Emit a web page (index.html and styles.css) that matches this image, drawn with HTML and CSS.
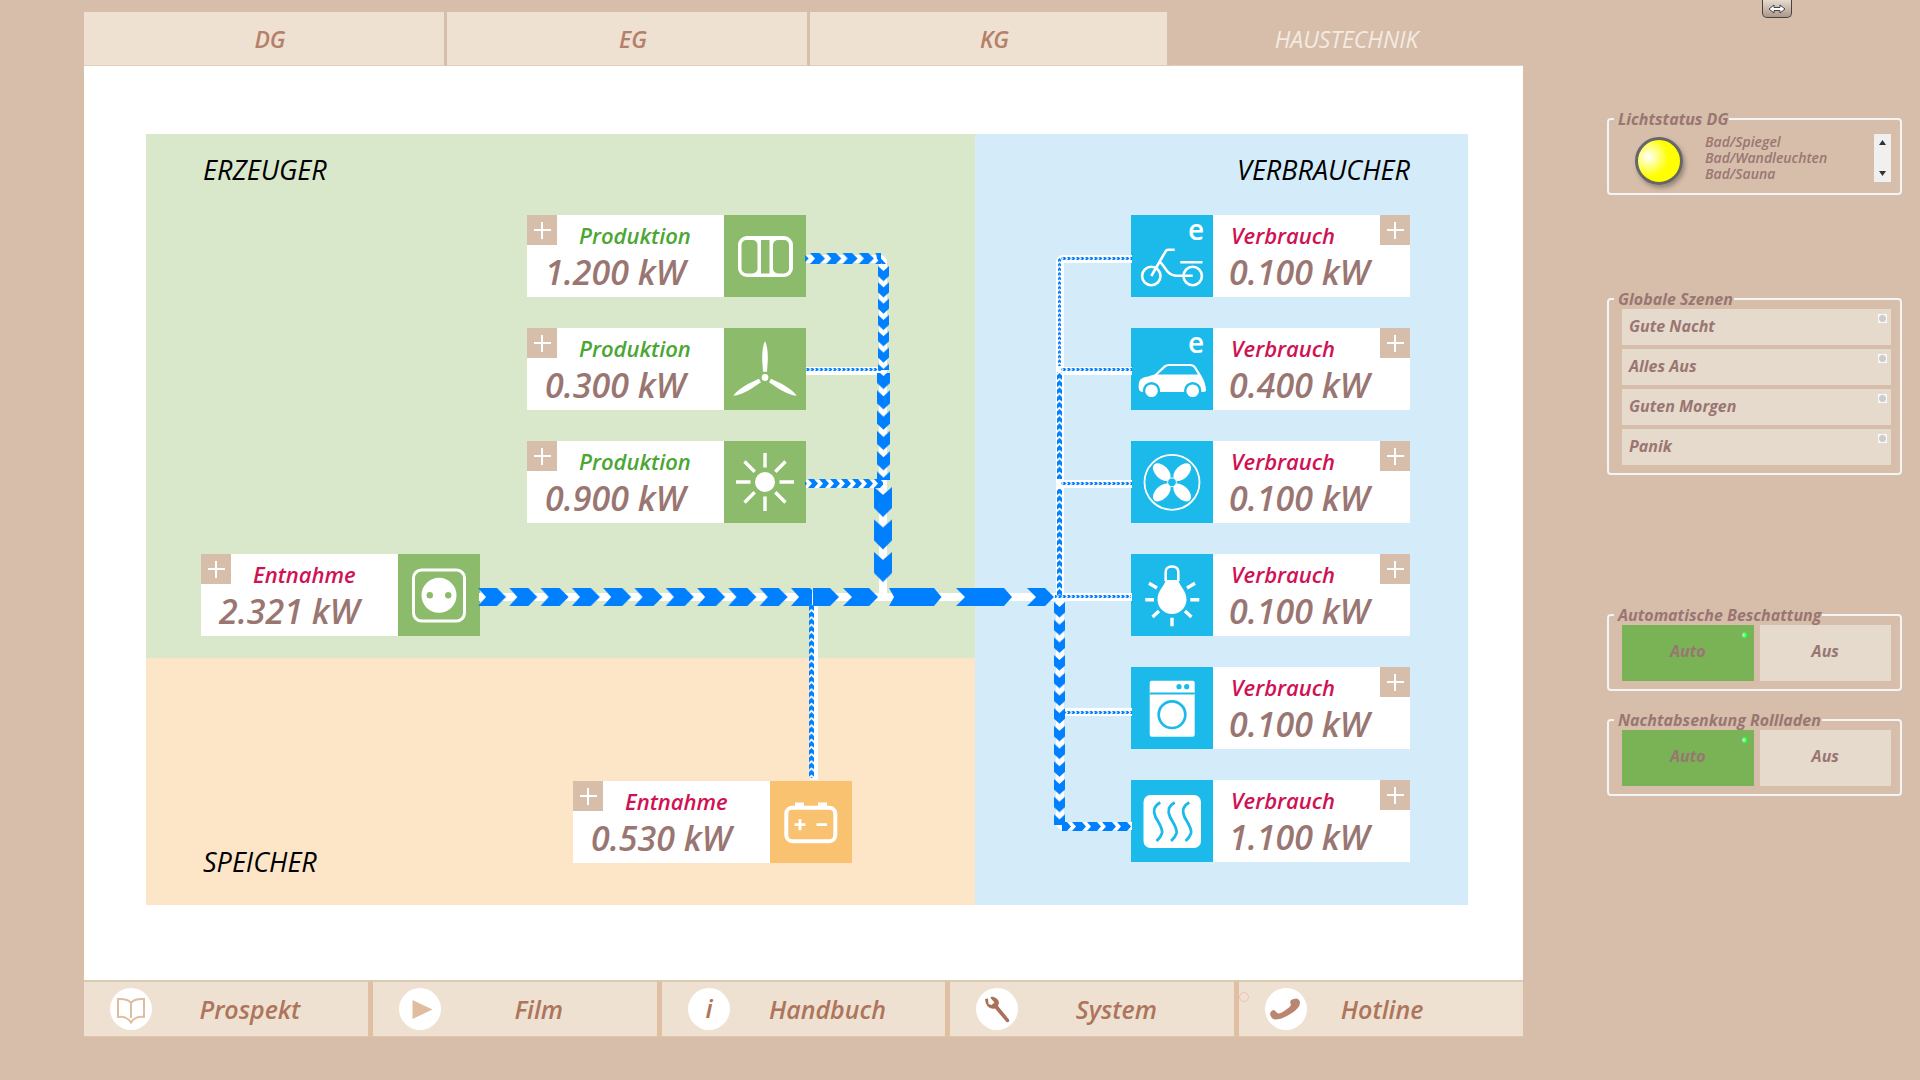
FILE: index.html
```html
<!DOCTYPE html>
<html lang="de">
<head>
<meta charset="utf-8">
<title>Haustechnik</title>
<link rel="stylesheet" href="styles.css">
</head>
<body>
<main class="main">
  <nav class="tabs" aria-label="Bereiche">
    <a class="tab" href="#dg">DG</a>
    <a class="tab" href="#eg">EG</a>
    <a class="tab" href="#kg">KG</a>
    <a class="tab tab--active" href="#haustechnik" aria-current="page">HAUSTECHNIK</a>
  </nav>

  <div class="panel">
    <div class="diagram">
      <section class="zone zone--producers">
        <h2 class="zone__title">ERZEUGER</h2>
        <article class="card">
          <div class="card__body">
            <div class="card__head"><button class="plus" aria-label="Details"></button><span class="card__label card__label--gain">Produktion</span></div>
            <span class="card__value">1.200 kW</span>
          </div>
          <svg class="card__icon card__icon--green" viewBox="0 0 82 82">
            <rect x="14" y="21" width="55" height="41" rx="9" fill="#fff"/>
            <rect x="17.5" y="25" width="16" height="33.5" rx="5" fill="#8cbb6b"/>
            <rect x="37" y="25" width="8.5" height="33.5" fill="#8cbb6b"/>
            <rect x="49" y="25" width="16" height="33.5" rx="5" fill="#8cbb6b"/>
          </svg>
        </article>
        <article class="card">
          <div class="card__body">
            <div class="card__head"><button class="plus" aria-label="Details"></button><span class="card__label card__label--gain">Produktion</span></div>
            <span class="card__value">0.300 kW</span>
          </div>
          <svg class="card__icon card__icon--green" viewBox="0 0 82 82" fill="#fff">
            <circle cx="41" cy="49.5" r="3.4"/>
            <path d="M41 13C43 17 44 24 43.8 32L43 43.7H39L38.2 32C38 24 39 17 41 13Z"/>
            <path d="M41 13C43 17 44 24 43.8 32L43 43.7H39L38.2 32C38 24 39 17 41 13Z" transform="rotate(120 41 49.5)"/>
            <path d="M41 13C43 17 44 24 43.8 32L43 43.7H39L38.2 32C38 24 39 17 41 13Z" transform="rotate(240 41 49.5)"/>
          </svg>
        </article>
        <article class="card">
          <div class="card__body">
            <div class="card__head"><button class="plus" aria-label="Details"></button><span class="card__label card__label--gain">Produktion</span></div>
            <span class="card__value">0.900 kW</span>
          </div>
          <svg class="card__icon card__icon--green" viewBox="0 0 82 82">
            <circle cx="41" cy="41" r="10" fill="#fff"/>
            <path d="M41 12V26.5M41 55.5V70M12 41H26.5M55.5 41H70M20.5 20.5L30.7 30.7M51.3 51.3L61.5 61.5M20.5 61.5L30.7 51.3M51.3 30.7L61.5 20.5" stroke="#fff" stroke-width="3.4"/>
          </svg>
        </article>
        <article class="card card--grid">
          <div class="card__body">
            <div class="card__head"><button class="plus" aria-label="Details"></button><span class="card__label">Entnahme</span></div>
            <span class="card__value">2.321 kW</span>
          </div>
          <svg class="card__icon card__icon--green" viewBox="0 0 82 82">
            <rect x="15.5" y="16" width="51" height="51" rx="8" fill="none" stroke="#fff" stroke-width="3"/>
            <circle cx="41" cy="41.3" r="17.5" fill="#fff"/>
            <circle cx="31.8" cy="41.3" r="3.2" fill="#8cbb6b"/><circle cx="50.2" cy="41.3" r="3.2" fill="#8cbb6b"/>
          </svg>
        </article>
      </section>

      <section class="zone zone--storage">
        <h2 class="zone__title">SPEICHER</h2>
        <article class="card">
          <div class="card__body">
            <div class="card__head"><button class="plus" aria-label="Details"></button><span class="card__label">Entnahme</span></div>
            <span class="card__value">0.530 kW</span>
          </div>
          <svg class="card__icon card__icon--orange" viewBox="0 0 82 82">
            <rect x="16.3" y="26.7" width="49" height="33.5" rx="6" fill="none" stroke="#fff" stroke-width="4"/>
            <path d="M25 25V21.5H34V25ZM48 25V21.5H57V25Z" fill="#fff"/>
            <path d="M24.5 43.7H35.5M30 38.2V49.2M46.5 43.7H57" stroke="#fff" stroke-width="2.8"/>
          </svg>
        </article>
      </section>

      <section class="zone zone--consumers">
        <h2 class="zone__title">VERBRAUCHER</h2>
        <article class="card card--consumer">
          <svg class="card__icon" viewBox="0 0 82 82">
            <g fill="none" stroke="#fff" stroke-width="2.6">
              <circle cx="20.3" cy="61" r="9.2"/><circle cx="61.7" cy="61" r="9.2"/>
              <path d="M43.7 34.7H37Q35.5 34.7 34.6 36.3L20.3 61M29.3 47.3C34 51 36 60.7 45 60.7H61.7M49.3 47.3H71.5"/>
            </g>
            <text x="57" y="25" class="e-mark">e</text>
          </svg>
          <div class="card__body">
            <div class="card__head"><span class="card__label">Verbrauch</span><button class="plus" aria-label="Details"></button></div>
            <span class="card__value">0.100 kW</span>
          </div>
        </article>
        <article class="card card--consumer">
          <svg class="card__icon" viewBox="0 0 82 82">
            <path d="M7.7 60C7.5 52 9 50 17 48.5L24 46.3L33 37.5Q35 36 38 36H59Q63 36 65 39L70 47Q75 55 75 63L73 64H12Q8 64 7.7 60Z" fill="#fff"/>
            <path d="M26.5 46.5L35 39Q36 38 38 38H59Q61.5 38 63 40L67 46.5Z" fill="#1bbaea"/>
            <circle cx="20.5" cy="62.7" r="7.5" fill="#fff" stroke="#1bbaea" stroke-width="2.4"/>
            <circle cx="61.7" cy="62.7" r="7.5" fill="#fff" stroke="#1bbaea" stroke-width="2.4"/>
            <text x="57" y="25" class="e-mark">e</text>
          </svg>
          <div class="card__body">
            <div class="card__head"><span class="card__label">Verbrauch</span><button class="plus" aria-label="Details"></button></div>
            <span class="card__value">0.400 kW</span>
          </div>
        </article>
        <article class="card card--consumer">
          <svg class="card__icon" viewBox="0 0 82 82" fill="#fff">
            <circle cx="41" cy="41.3" r="27.5" fill="none" stroke="#fff" stroke-width="1.8"/>
            <ellipse cx="30.8" cy="31.1" rx="10.8" ry="6.4" transform="rotate(45 30.8 31.1)"/>
            <ellipse cx="51.2" cy="31.1" rx="10.8" ry="6.4" transform="rotate(-45 51.2 31.1)"/>
            <ellipse cx="30.8" cy="51.5" rx="10.8" ry="6.4" transform="rotate(-45 30.8 51.5)"/>
            <ellipse cx="51.2" cy="51.5" rx="10.8" ry="6.4" transform="rotate(45 51.2 51.5)"/>
            <circle cx="41" cy="41.3" r="4.4" fill="#1bbaea" stroke="#fff"/>
          </svg>
          <div class="card__body">
            <div class="card__head"><span class="card__label">Verbrauch</span><button class="plus" aria-label="Details"></button></div>
            <span class="card__value">0.100 kW</span>
          </div>
        </article>
        <article class="card card--consumer">
          <svg class="card__icon" viewBox="0 0 82 82">
            <path d="M34.5 26H47.5C48 32 55.5 36 55.5 45.5A14.5 14.5 0 0 1 26.5 45.5C26.5 36 34 32 34.5 26Z" fill="#fff"/>
            <path d="M34.7 27V18Q34.7 12.5 41 12.5T47.3 18V27" fill="none" stroke="#fff" stroke-width="2.6"/>
            <path d="M14.3 45.7H23M59.3 45.7H68.3M18 29.3L26 34M64 29.3L56 34M21.5 63L28 57M60.5 63L54 57M41 63.7V72.3" stroke="#fff" stroke-width="3.4"/>
          </svg>
          <div class="card__body">
            <div class="card__head"><span class="card__label">Verbrauch</span><button class="plus" aria-label="Details"></button></div>
            <span class="card__value">0.100 kW</span>
          </div>
        </article>
        <article class="card card--consumer">
          <svg class="card__icon" viewBox="0 0 82 82">
            <rect x="18.7" y="13.7" width="45" height="56" rx="2" fill="#fff"/>
            <path d="M18.7 26.5H63.7" stroke="#1bbaea" stroke-width="1.8"/>
            <circle cx="48" cy="19.7" r="2.6" fill="#1bbaea"/><circle cx="55.7" cy="19.7" r="2.6" fill="#1bbaea"/>
            <circle cx="41" cy="47.7" r="13.3" fill="none" stroke="#1bbaea" stroke-width="2.7"/>
          </svg>
          <div class="card__body">
            <div class="card__head"><span class="card__label">Verbrauch</span><button class="plus" aria-label="Details"></button></div>
            <span class="card__value">0.100 kW</span>
          </div>
        </article>
        <article class="card card--consumer">
          <svg class="card__icon" viewBox="0 0 82 82">
            <rect x="12.5" y="15" width="57.5" height="53" rx="7" fill="#fff"/>
            <g fill="none" stroke="#1bbaea" stroke-width="2.8">
              <path d="M29.3 22.5C22.5 26 22 32 24.5 37S32 48 31 53Q30 57 25.5 61"/>
              <path d="M43.8 22.5C37 26 36.5 32 39 37S46.5 48 45.5 53Q44.5 57 40 61"/>
              <path d="M58.3 22.5C51.5 26 51 32 53.5 37S61 48 60 53Q59 57 54.5 61"/>
            </g>
          </svg>
          <div class="card__body">
            <div class="card__head"><span class="card__label">Verbrauch</span><button class="plus" aria-label="Details"></button></div>
            <span class="card__value">1.100 kW</span>
          </div>
        </article>
      </section>

      <svg class="wires" viewBox="146 134 1322 771" aria-hidden="true">
        <defs>
          <pattern id="right-l" patternUnits="userSpaceOnUse" x="478" y="588" width="31.3" height="18"><path d="M0 0H19L28 9L19 18H0L8 9Z"/></pattern>
          <pattern id="right-m" patternUnits="userSpaceOnUse" x="810" y="253" width="16.3" height="11"><path d="M0 0H9.5L15 5.5L9.5 11H0L5 5.5Z"/></pattern>
          <pattern id="right-s" patternUnits="userSpaceOnUse" x="808" y="479" width="11" height="9"><path d="M0 0H6L10 4.5L6 9H0L4 4.5Z"/></pattern>
          <pattern id="right-s2" patternUnits="userSpaceOnUse" x="1057" y="822" width="15" height="9"><path d="M0 0H10L14 4.5L10 9H0L4 4.5Z"/></pattern>
          <pattern id="right-xs" patternUnits="userSpaceOnUse" x="806" y="0" width="4.5" height="3"><path d="M0 0H2.5L4 1.5L2.5 3H0L1 1.5Z"/></pattern>
          <pattern id="down-l" patternUnits="userSpaceOnUse" x="874" y="487" width="18" height="32.5"><path d="M0 0L9 8L18 0V21L9 30L0 21Z"/></pattern>
          <pattern id="down-m2" patternUnits="userSpaceOnUse" x="877" y="370" width="13" height="20.3"><path d="M0 0L6.5 6L13 0V13L6.5 19L0 13Z"/></pattern>
          <pattern id="down-m" patternUnits="userSpaceOnUse" x="878" y="266" width="11" height="16.3"><path d="M0 0L5.5 5L11 0V10L5.5 15L0 10Z"/></pattern>
          <pattern id="down-c" patternUnits="userSpaceOnUse" x="1054" y="602" width="11" height="17.7"><path d="M0 0L5.5 5L11 0V10.5L5.5 15.5L0 10.5Z"/></pattern>
          <pattern id="up-s" patternUnits="userSpaceOnUse" x="1057" y="373" width="5" height="7.2"><path d="M0 2.5L2.5 0L5 2.5V7L2.5 5L0 7Z"/></pattern>
          <pattern id="up-b" patternUnits="userSpaceOnUse" x="809" y="604" width="5" height="7.2"><path d="M0 2.5L2.5 0L5 2.5V7L2.5 5L0 7Z"/></pattern>
          <pattern id="up-xs" patternUnits="userSpaceOnUse" x="1058" y="258" width="3" height="4.6"><path d="M0 1.5L1.5 0L3 1.5V4L1.5 3L0 4Z"/></pattern>
        </defs>
        <g class="track">
          <path d="M806 259H879Q883 259 883 263V597M806 371H883M806 484H883M479 597H1060"/>
          <path d="M1132 259H1064Q1060 259 1060 263V822Q1060 826 1064 826H1132M1060 371H1132M1060 484H1132M1060 597H1132M1060 712H1132M814 597V780"/>
        </g>
        <rect x="805" y="253" width="76" height="11" fill="url(#right-m)"/>
        <path d="M876 253L886 264H882L877 259Z"/>
        <rect x="878" y="266" width="11" height="104" fill="url(#down-m)"/>
        <g transform="translate(0 368)"><rect x="806" width="76" height="3" fill="url(#right-xs)"/></g>
        <rect x="877" y="373" width="13" height="107" fill="url(#down-m2)"/>
        <rect x="805" y="479" width="78" height="9" fill="url(#right-s)"/>
        <rect x="874" y="487" width="18" height="97" fill="url(#down-l)"/>
        <rect x="478" y="588" width="334" height="18" fill="url(#right-l)"/>
        <path d="M813 588H830L839 597L830 606H813ZM843 588H869L878 597L869 606H843L852 597ZM889 588H934L941.5 597L934 606H889L894 597ZM956 588H1004L1012 597L1004 606H956L965 597ZM1027 588H1045L1054 597L1045 606H1027L1036 597Z"/>
        <rect x="809" y="604" width="5" height="174" fill="url(#up-b)"/>
        <rect x="1058" y="258" width="3" height="108" fill="url(#up-xs)"/>
        <rect x="1057" y="372" width="5" height="107" fill="url(#up-s)"/>
        <rect x="1057" y="489" width="5" height="107" fill="url(#up-s)"/>
        <rect x="1054" y="602" width="11" height="223" fill="url(#down-c)"/>
        <g transform="translate(0 257)"><rect x="1061" width="71" height="3" fill="url(#right-xs)"/></g>
        <g transform="translate(0 368)"><rect x="1061" width="71" height="3" fill="url(#right-xs)"/></g>
        <g transform="translate(0 482)"><rect x="1061" width="71" height="3" fill="url(#right-xs)"/></g>
        <g transform="translate(0 595)"><rect x="1055" width="76" height="3" fill="url(#right-xs)"/></g>
        <g transform="translate(0 711)"><rect x="1061" width="71" height="3" fill="url(#right-xs)"/></g>
        <rect x="1062" y="822" width="69" height="9" fill="url(#right-s2)"/>
      </svg>
    </div>
  </div>

  <nav class="menu" aria-label="Menü">
    <a class="menu__item" href="#prospekt">
      <svg class="menu__icon" viewBox="0 0 42 42"><circle cx="21" cy="21" r="21" fill="#fff"/><path d="M21 30V15Q18 10.5 8 11V29Q17 28 21 34.5Q25 28 34 29V11Q24 10.5 21 15" fill="none" stroke="#e0bd9e" stroke-width="2"/></svg>
      <span class="menu__label">Prospekt</span></a>
    <a class="menu__item" href="#film">
      <svg class="menu__icon" viewBox="0 0 42 42"><circle cx="21" cy="21" r="21" fill="#fff"/><path d="M13.5 12V31L33.5 21.5Z" fill="#e0bd9e"/></svg>
      <span class="menu__label">Film</span></a>
    <a class="menu__item" href="#handbuch">
      <svg class="menu__icon" viewBox="0 0 42 42"><circle cx="21" cy="21" r="21" fill="#fff"/><text x="21" y="30" text-anchor="middle" class="i-mark">i</text></svg>
      <span class="menu__label">Handbuch</span></a>
    <a class="menu__item" href="#system">
      <svg class="menu__icon" viewBox="0 0 42 42"><circle cx="21" cy="21" r="21" fill="#fff"/><path d="M9 11L12 10.5L12.5 16L15.5 17L18.5 14.5L14.5 10L15.5 8.5Q22 9.5 23 14.5L22 18L33 31.5Q34 35 30.5 34L19 20.5Q10 22 9 11Z" fill="#a9705a"/></svg>
      <span class="menu__label">System</span></a>
    <a class="menu__item menu__item--hotline" href="#hotline">
      <svg class="menu__icon" viewBox="0 0 42 42"><circle cx="21" cy="21" r="21" fill="#fff"/><path d="M26 17Q24 13 27 11.5L31 10.500Q35 11 35 15Q34.500 20 27 25Q17 31.500 10.500 31.500Q6 31 5 26Q6 22 9 22L13 25.500Q15 26 20 22.500Q25 19 26 17Z" fill="#ba8670"/></svg>
      <span class="menu__label">Hotline</span></a>
  </nav>
</main>

<aside class="sidebar">
  <button class="toggle" aria-label="Seitenleiste umschalten">
    <svg width="18" height="10" viewBox="0 0 18 10"><path d="M1 5L6 1V3.5H12V1L17 5L12 9V6.5H6V9Z" fill="#fff" stroke="#444"/></svg>
  </button>

  <fieldset class="group group--status">
    <legend>Lichtstatus DG</legend>
    <div class="status">
      <span class="lamp"></span>
      <ul class="status__list"><li>Bad/Spiegel</li><li>Bad/Wandleuchten</li><li>Bad/Sauna</li></ul>
      <div class="scroll">
        <button class="scroll__btn" aria-label="Nach oben"><svg width="7" height="5" viewBox="0 0 7 5"><path d="M0 5L3.5 0L7 5Z" fill="#333"/></svg></button>
        <button class="scroll__btn" aria-label="Nach unten"><svg width="7" height="5" viewBox="0 0 7 5"><path d="M0 0L3.5 5L7 0Z" fill="#333"/></svg></button>
      </div>
    </div>
  </fieldset>

  <fieldset class="group group--scenes">
    <legend>Globale Szenen</legend>
    <div class="scenes">
      <button class="scene">Gute Nacht<span class="dot"></span></button>
      <button class="scene">Alles Aus<span class="dot"></span></button>
      <button class="scene">Guten Morgen<span class="dot"></span></button>
      <button class="scene">Panik<span class="dot"></span></button>
    </div>
  </fieldset>

  <fieldset class="group group--shade">
    <legend>Automatische Beschattung</legend>
    <div class="switch">
      <button class="switch__btn switch__btn--on" aria-pressed="true">Auto<span class="led"></span></button>
      <button class="switch__btn" aria-pressed="false">Aus</button>
    </div>
  </fieldset>

  <fieldset class="group group--night">
    <legend>Nachtabsenkung Rollladen</legend>
    <div class="switch">
      <button class="switch__btn switch__btn--on" aria-pressed="true">Auto<span class="led"></span></button>
      <button class="switch__btn" aria-pressed="false">Aus</button>
    </div>
  </fieldset>
</aside>
</body>
</html>
```

FILE: styles.css
```css
:root {
  --tan: #d6beab;
  --cream: #efe1d1;
  --sand: #e6dacd;
  --mauve: #9a7672;
  --rust: #b58069;
}

* { box-sizing: border-box; }

body {
  margin: 0;
  min-height: 100vh;
  padding-left: 84px;
  display: grid;
  grid-template-columns: minmax(0, 1fr) 397px;
  align-items: start;
  background: var(--tan);
  font-family: "Open Sans", "Noto Sans", sans-serif;
  font-style: italic;
}

a { text-decoration: none; color: inherit; }

button {
  padding: 0;
  border: 0;
  border-radius: 0;
  font: inherit;
  color: inherit;
}

/* floor tabs */
.main { padding-top: 12px; }

.tabs {
  display: grid;
  grid-template-columns: 363fr 363fr 360fr 353fr;
  height: 54px;
}

.tab {
  display: flex;
  align-items: center;
  justify-content: center;
  padding-left: 12px;
  border-right: 3px solid var(--tan);
  border-bottom: 1px solid #e3cdb9;
  background: var(--cream);
  color: var(--rust);
  font-size: 23px;
  font-weight: 600;
}

.tab--active {
  padding-left: 0;
  border-right: 0;
  background: var(--tan);
  color: #f5eae0;
  font-weight: 500;
}

/* energy diagram */
.panel {
  display: flex;
  justify-content: center;
  padding: 68px 0 75px 7px;
  background: #fff;
}

.diagram {
  position: relative;
  flex: none;
  width: 1322px;
  display: grid;
  grid-template-columns: 829fr 493fr;
  grid-template-rows: 524px 247px;
}

.zone { display: flex; flex-direction: column; }

.zone--producers {
  align-items: flex-end;
  gap: 31px;
  padding-right: 169px;
  background: #d9e7cb;
}

.zone--storage {
  flex-direction: row;
  align-items: flex-end;
  justify-content: space-between;
  padding: 0 123px 0 57px;
  background: #fde6c8;
}

.zone--consumers {
  grid-area: 1 / 2 / 3 / 3;
  align-items: flex-end;
  gap: 31px;
  padding-right: 58px;
  background: #d4ebf9;
}

.zone__title {
  margin: 0;
  color: #000;
  font-size: 27px;
  font-weight: 500;
  line-height: 72px;
}

.zone--producers .zone__title { align-self: flex-start; padding-left: 57px; }
.zone--producers .zone__title,
.zone--consumers .zone__title { margin-bottom: -22px; }
.zone--storage .zone__title { margin-bottom: 7px; }
.zone--storage .card { margin-bottom: 42px; }

.card {
  display: flex;
  width: 279px;
  height: 82px;
  background: #fff;
}

.card--grid { align-self: flex-start; margin-left: 55px; }

.card__icon { flex: none; width: 82px; height: 82px; overflow: visible; background: #1bbaea; }
.card__icon--green { background: #8cbb6b; }
.card__icon--orange { background: #f9c270; }

.card__body { flex: 1; display: flex; flex-direction: column; }

.card__head { display: flex; height: 38px; gap: 22px; }

.card__label {
  flex: 1;
  color: #cf1254;
  font-size: 22px;
  font-weight: 600;
  line-height: 40px;
}

.card__label--gain { color: #4ca634; }

.card__value {
  padding-left: 18px;
  color: var(--mauve);
  font-size: 34px;
  font-weight: 600;
  line-height: 38px;
  white-space: nowrap;
}

.card--consumer .card__label { padding-left: 18px; }
.card--consumer .card__value { padding-left: 16px; }

.plus {
  flex: none;
  width: 30px;
  height: 30px;
  background:
    linear-gradient(#fff, #fff) center / 17px 2px no-repeat,
    linear-gradient(#fff, #fff) center / 2px 17px no-repeat,
    var(--tan);
}

.e-mark { fill: #fff; font-size: 28px; font-weight: 600; font-style: normal; }

.wires {
  position: absolute;
  inset: 0;
  width: 100%;
  height: 100%;
  fill: #0080ff;
  pointer-events: none;
}

.wires pattern path { fill: #0080ff; }
.track path { fill: none; stroke: #fff; stroke-width: 8; }

/* bottom menu */
.menu {
  display: grid;
  grid-template-columns: repeat(5, 1fr);
  gap: 5px;
  height: 57px;
  border-top: 2px solid #d8cbb2;
  background: #e0bfa3;
}

.menu__item {
  position: relative;
  display: flex;
  align-items: center;
  padding: 0 20px 0 26px;
  border-bottom: 1px solid #e3c4a8;
  background: var(--cream);
  color: #ad755c;
  font-size: 25px;
  font-weight: 600;
}

.menu__item--hotline { padding-right: 66px; }

.menu__item--hotline::before {
  content: "";
  position: absolute;
  left: 0;
  top: 10px;
  width: 8px;
  height: 8px;
  border: 1px solid #f8bdb8;
  border-radius: 50%;
}

.menu__icon { flex: none; width: 42px; height: 42px; }
.menu__label { flex: 1; text-align: center; }
.i-mark { fill: #ad755c; font-size: 26px; font-weight: 600; }

/* sidebar */
.sidebar {
  display: flex;
  flex-direction: column;
  padding: 0 18px 0 84px;
  color: var(--mauve);
  font-size: 16px;
  font-weight: 700;
}

.toggle {
  display: flex;
  align-items: center;
  justify-content: center;
  width: 30px;
  height: 18px;
  margin: 0 0 91px 155px;
  border: 1px solid #444;
  border-top: 0;
  border-radius: 0 0 5px 5px;
  background: linear-gradient(#e6dbd0, #ab9888);
}

.group {
  min-width: 0;
  margin: 0;
  padding: 0 9px 8px 13px;
  border: 2px solid #f4f4f4;
  border-radius: 4px;
}

.group legend {
  margin-left: -8px;
  padding: 0 1px 0 4px;
  line-height: 20px;
}

.group--status { padding-top: 5px; padding-bottom: 11px; }
.group--scenes { margin-top: 94px; }
.group--shade { margin-top: 130px; }
.group--night { margin-top: 19px; }

.status { display: flex; align-items: center; height: 48px; }

.lamp {
  width: 48px;
  height: 48px;
  margin: 6px 0 0 13px;
  border: 3px solid #666;
  border-radius: 50%;
  background: radial-gradient(circle at 25% 40%, #fff, #ff0 50%);
  box-shadow: 2px 3px 4px rgba(90, 80, 70, .5);
}

.status__list {
  flex: 1;
  margin: 0 0 0 22px;
  padding: 0;
  list-style: none;
  font-size: 14px;
  font-weight: 600;
  line-height: 16px;
}

.scroll {
  display: flex;
  flex-direction: column;
  justify-content: space-between;
  width: 17px;
  height: 48px;
  background: #f0f0f0;
}

.scroll__btn {
  display: flex;
  align-items: center;
  justify-content: center;
  height: 17px;
  background: none;
}

.scenes { display: grid; gap: 4px; }

.scene {
  display: flex;
  justify-content: space-between;
  height: 36px;
  padding: 5px 4px 0 7px;
  background: var(--sand);
  line-height: 24px;
}

.dot {
  width: 9px;
  height: 9px;
  background: radial-gradient(circle, #ccc 3px, #f7f7f7 4px);
}

.switch { display: grid; grid-template-columns: 1fr 1fr; gap: 6px; }

.switch__btn {
  position: relative;
  height: 56px;
  padding-bottom: 4px;
  background: var(--sand);
}

.switch__btn--on { background: #79b356; }

.led {
  position: absolute;
  top: 6px;
  right: 5px;
  width: 8px;
  height: 8px;
  border: 1px solid #8fa88a;
  border-radius: 50%;
  background: radial-gradient(circle at 30% 50%, #c8ffc8, #0f0 70%);
}
```
